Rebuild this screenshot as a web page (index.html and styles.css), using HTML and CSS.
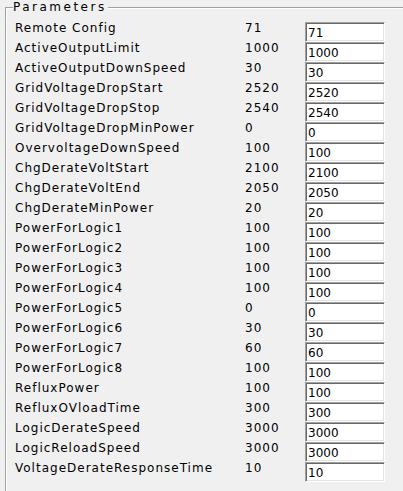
FILE: index.html
```html
<!DOCTYPE html>
<html lang="en">
<head>
    <meta charset="UTF-8">
    <title>Parameters</title>
    <link rel="stylesheet" href="styles.css">
</head>
<body>

    <div class="group">
        <span class="group-title">Parameters</span>

        <div class="param-list" id="param-list"></div>
    </div>

<script>
const params = [
    ["Remote Config", 71],
    ["ActiveOutputLimit", 1000],
    ["ActiveOutputDownSpeed", 30],
    ["GridVoltageDropStart", 2520],
    ["GridVoltageDropStop", 2540],
    ["GridVoltageDropMinPower", 0],
    ["OvervoltageDownSpeed", 100],
    ["ChgDerateVoltStart", 2100],
    ["ChgDerateVoltEnd", 2050],
    ["ChgDerateMinPower", 20],
    ["PowerForLogic1", 100],
    ["PowerForLogic2", 100],
    ["PowerForLogic3", 100],
    ["PowerForLogic4", 100],
    ["PowerForLogic5", 0],
    ["PowerForLogic6", 30],
    ["PowerForLogic7", 60],
    ["PowerForLogic8", 100],
    ["RefluxPower", 100],
    ["RefluxOVloadTime", 300],
    ["LogicDerateSpeed", 3000],
    ["LogicReloadSpeed", 3000],
    ["VoltageDerateResponseTime", 10]
];

const list = document.getElementById('param-list');

params.forEach(function (p) {
    const name = document.createElement('span');
    name.className = 'param-name';
    name.textContent = p[0];

    const value = document.createElement('span');
    value.className = 'param-value';
    value.textContent = p[1];

    const input = document.createElement('input');
    input.type = 'text';
    input.className = 'param-input';
    input.value = p[1];

    list.appendChild(name);
    list.appendChild(value);
    list.appendChild(input);
});
</script>
</body>
</html>
```

FILE: styles.css
```css
*
{
    margin: 0;
    padding: 0;
    box-sizing: border-box;
}

body
{
    height: 100vh;
    background: #f0f0f0;
    font-family: "DejaVu Sans", Verdana, sans-serif;
    font-size: 12px;
    color: #000;
    overflow: hidden;
}

.group
{
    position: relative;
    margin: 7px 0 0 5px;
    padding: 14px 0 0 9px;
    height: calc(100vh - 7px);
    border-top: 1px solid #a0a0a0;
    border-left: 1px solid #a0a0a0;
    box-shadow: inset 1px 1px 0 #fff;
}

.group-title
{
    position: absolute;
    top: -8px;
    left: 7px;
    padding: 0 1px 0 0;
    line-height: 14px;
    letter-spacing: 2.5px;
    background: #f0f0f0;
}

.param-list
{
    display: grid;
    grid-template-columns: 230px 60px 80px;
    grid-auto-rows: 20px;
}

.param-name,
.param-value
{
    line-height: 13px;
    letter-spacing: 1px;
}

.param-input
{
    width: 80px;
    height: 20px;
    padding: 2px 0 0 2px;
    font-family: inherit;
    font-size: 12px;
    color: #000;
    background: #fff;
    outline: none;
    border-top: 1px solid #a0a0a0;
    border-left: 1px solid #a0a0a0;
    border-bottom: 1px solid #fff;
    border-right: 1px solid #fff;
    box-shadow: inset 1px 1px 0 #696969, inset -1px -1px 0 #e3e3e3;
}
```
